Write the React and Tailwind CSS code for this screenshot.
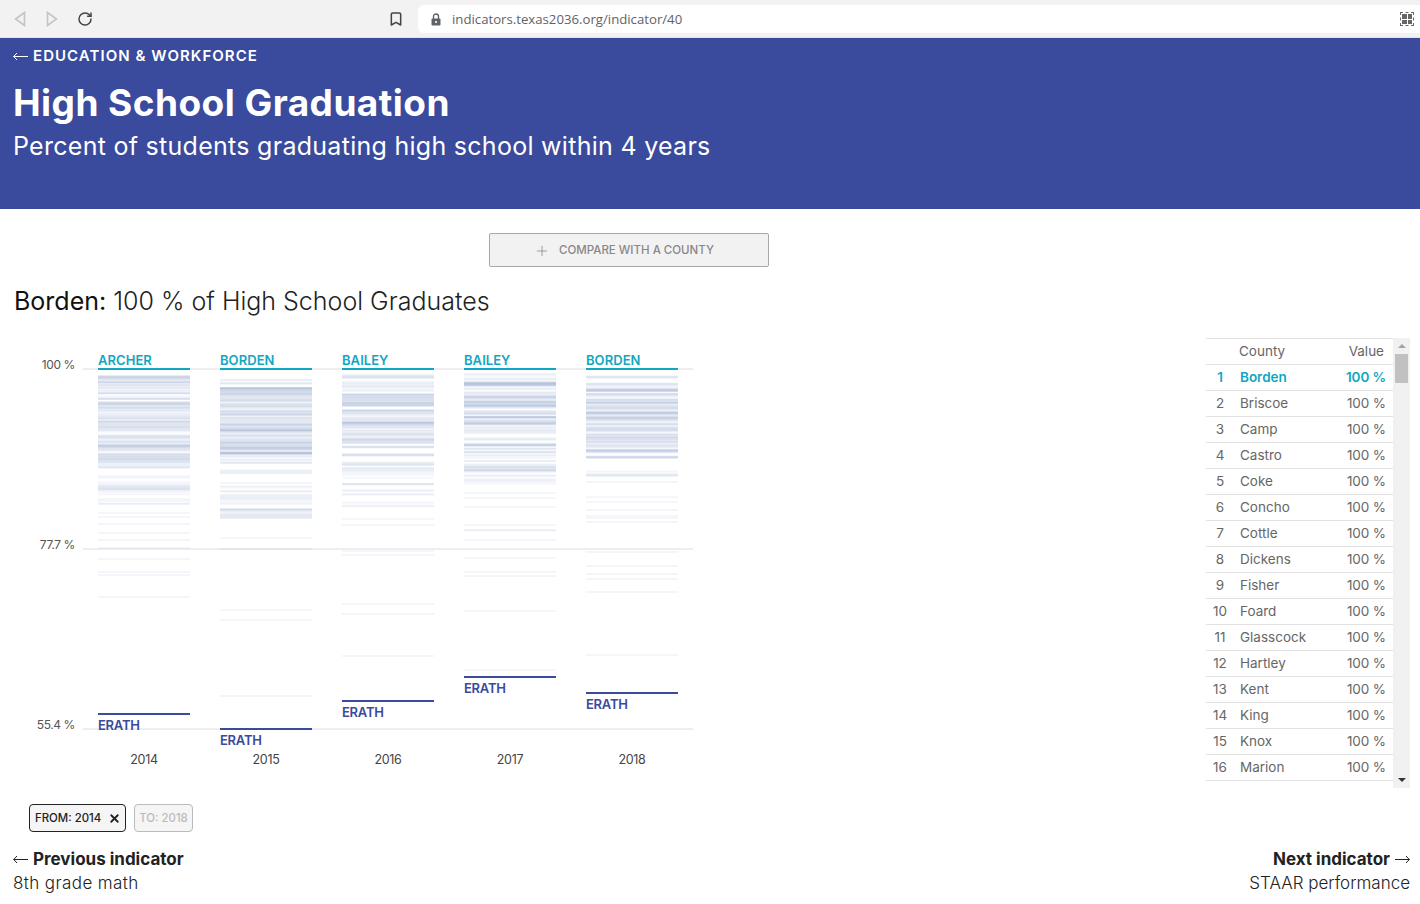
import { Bookmark, RotateCw, Plus, X } from "lucide-react";

const FONT = { fontFamily: '"Inter", "Open Sans", sans-serif' };

const ROWS = ["Borden", "Briscoe", "Camp", "Castro", "Coke", "Concho", "Cottle", "Dickens", "Fisher", "Foard", "Glasscock", "Hartley", "Kent", "King", "Knox", "Marion"];

// segs: [from y, to y, how many bands], lines: single faint bands lower down
const COLS = [
  { x: 98, year: 2014, top: "ARCHER", low: 714, seed: 3, segs: [[375, 467, 130], [473, 503, 18]], lines: [512, 516, 523, 532, 539, 547, 558, 571, 574, 596] },
  { x: 220, year: 2015, top: "BORDEN", low: 729, seed: 11, segs: [[377, 383, 5], [387, 463, 135], [468, 517, 30]], lines: [537, 548, 609, 619, 695] },
  { x: 342, year: 2016, top: "BAILEY", low: 701, seed: 23, segs: [[373, 390, 15], [393, 447, 85], [452, 457, 5], [461, 477, 13], [481, 484, 3], [489, 496, 4], [501, 507, 3]], lines: [518, 524, 550, 554, 603, 613, 655] },
  { x: 464, year: 2017, top: "BAILEY", low: 677, seed: 37, segs: [[373, 377, 3], [378, 413, 60], [415, 433, 28], [435, 440, 3], [442, 448, 11], [450, 483, 28]], lines: [492, 497, 506, 524, 529, 529.5, 539, 557, 571, 575, 610, 669] },
  { x: 586, year: 2018, top: "BORDEN", low: 693, seed: 51, segs: [[375, 380, 4], [382, 457, 120], [470, 477, 5]], lines: [481, 496, 501, 509, 515, 517, 521, 551, 565, 573, 578, 591, 654] },
];

// small seeded generator so the bands stay the same between renders
const rng = (seed) => {
  let s = seed;
  return () => {
    s = (s * 16807) % 2147483647;
    return (s % 10000) / 10000;
  };
};

const bands = (col) => {
  const r = rng(col.seed * 7919 + 1);
  const out = [];
  col.segs.forEach(([a, b, n]) => {
    for (let i = 0; i < n; i++) out.push(a + r() * (b - a));
  });
  return [...out, ...col.lines];
};

const Arrow = ({ flip }) => (
  <svg width="15" height="9" viewBox="0 0 15 9" className={`inline-block ${flip ? "rotate-180" : ""}`} fill="none" stroke="currentColor" strokeWidth="1">
    <path d="M0.5 4.5H15M4 1L0.7 4.5L4 8" />
  </svg>
);

const Tri = ({ flip }) => (
  <svg width="12" height="16" viewBox="0 0 12 16" className={flip ? "rotate-180" : ""} fill="none" stroke="#c4c4c4" strokeWidth="1.6">
    <path d="M10.5 1.5V14.5L1.5 8Z" />
  </svg>
);

const Chart = () => (
  <svg width="700" height="440" viewBox="0 340 700 440" className="block" style={FONT}>
    {[369, 549, 729].map((y) => (
      <rect key={y} x="83" y={y - 1} width="610" height="2" fill="#eeeef1" />
    ))}
    {[["100 %", 369], ["77.7 %", 549], ["55.4 %", 729]].map(([t, y]) => (
      <text key={t} x="75" y={y} textAnchor="end" fontSize="12" letterSpacing="-0.4" fill="#555">{t}</text>
    ))}
    {COLS.map((col) => (
      <g key={col.year}>
        {bands(col).map((y, i) => (
          <rect key={i} x={col.x} y={y} width="92" height="2" fill="#5a78b0" opacity="0.065" />
        ))}
        <rect x={col.x} y="368" width="92" height="2" fill="#12a6c2" />
        <text x={col.x} y="365" fontSize="13" fontWeight="600" letterSpacing="0.05" fill="#12a6c2">{col.top}</text>
        <rect x={col.x} y={col.low - 1} width="92" height="2" fill="#3a4a9c" />
        <text x={col.x} y={col.low + 16} fontSize="13" fontWeight="600" letterSpacing="-0.25" fill="#3a4a9c">ERATH</text>
        <text x={col.x + 46} y="764" textAnchor="middle" fontSize="12.5" letterSpacing="-0.3" fill="#444">{col.year}</text>
      </g>
    ))}
  </svg>
);

const CountyTable = () => (
  <div className="flex w-[204px] h-[450px]">
    <div className="w-[187px] text-[13.5px] text-[#666]">
      <div className="flex h-[27px] items-center border-y border-[#e2e2e2] pr-[9px]">
        <span className="ml-[33px]">County</span>
        <span className="ml-auto">Value</span>
      </div>
      {ROWS.map((name, i) => (
        <div key={name} className={`flex h-[26px] items-center border-b border-[#e2e2e2] pr-[7px] ${i === 0 ? "text-[#12a6c2] font-semibold" : ""}`}>
          <span className="w-[28px] text-center">{i + 1}</span>
          <span className="ml-[6px]">{name}</span>
          <span className="ml-auto tracking-[-0.1px]">100 %</span>
        </div>
      ))}
    </div>
    <div className="w-[17px] bg-[#f1f1f1] flex flex-col items-center">
      <div className="h-[16px] flex items-center justify-center">
        <div className="w-0 h-0 border-x-[4px] border-x-transparent border-b-[4px] border-b-[#a3a3a3]" />
      </div>
      <div className="w-[13px] h-[29px] bg-[#c1c1c1]" />
      <div className="mt-auto h-[16px] flex items-center justify-center">
        <div className="w-0 h-0 border-x-[4px] border-x-transparent border-t-[4px] border-t-[#333]" />
      </div>
    </div>
  </div>
);

export default function App() {
  return (
    <div className="w-[1420px] h-[904px] overflow-hidden bg-white text-[#222]" style={FONT}>
      <div className="h-[38px] bg-[#f2f2f2] flex items-center border-b border-[#e4e4e4]">
        <div className="ml-[14px]"><Tri /></div>
        <div className="ml-[20px]"><Tri flip /></div>
        <RotateCw size={16} strokeWidth={2.2} className="ml-[19px] text-[#444]" />
        <Bookmark size={16} strokeWidth={2.3} className="ml-[295px] text-[#444]" />
        <div className="ml-[14px] mt-[1px] flex-1 h-[28px] bg-white rounded-l-md flex items-center pl-[13px] text-[13.2px] text-[#5f6368]">
          <svg width="10" height="13" viewBox="0 0 10 13">
            <path d="M2.5 6V3.5a2.5 2.5 0 0 1 5 0V6" fill="none" stroke="#5f6368" strokeWidth="1.4" />
            <rect x="0.5" y="5.5" width="9" height="7" rx="1" fill="#5f6368" />
            <circle cx="5" cy="9" r="1.1" fill="#fff" />
          </svg>
          <span className="ml-[11px] pt-[1px]" style={{ fontFamily: '"Open Sans", sans-serif' }}>indicators.texas2036.org/indicator/40</span>
          <div className="ml-auto mr-[6px] w-[14px] h-[14px] border border-dashed border-[#666] grid grid-cols-2 gap-[1px] p-[1px]">
            <span className="bg-[#666]" /><span className="bg-[#666]" /><span className="bg-[#666]" /><span className="bg-[#666]" />
          </div>
        </div>
      </div>

      <header className="h-[171px] bg-[#3a4a9c] text-white pl-[13px] pt-[9px]">
        <div className="text-[15px] font-semibold leading-[18px] tracking-[1.05px] flex items-center gap-[5px]"><Arrow /> EDUCATION &amp; WORKFORCE</div>
        <h1 className="mt-[16px] text-[37px] font-bold leading-[44px] tracking-[0.45px]">High School Graduation</h1>
        <p className="mt-[5px] text-[25px] leading-[32px] tracking-[0.28px]">Percent of students graduating high school within 4 years</p>
      </header>

      <div className="pl-[489px] pt-[24px]">
        <button className="w-[280px] h-[34px] pr-[10px] pt-[1px] bg-[#f2f2f2] border border-[#a8a8a8] rounded-[2px] flex items-center justify-center gap-[9px] text-[11.5px] font-medium text-[#888]">
          <Plus size={16} strokeWidth={1.2} />
          COMPARE WITH A COUNTY
        </button>
      </div>

      <h2 className="pl-[14px] mt-[17px] text-[25px] leading-[34px] font-light">
        <span className="font-normal text-[#111]">Borden:</span> 100 % of High School Graduates
      </h2>

      <div className="flex justify-between pr-[10px] mt-[22px]">
        <Chart />
        <div className="mt-[-2px]">
          <CountyTable />
        </div>
      </div>

      <div className="pl-[29px] mt-[16px] flex gap-[8px] text-[11.4px] font-medium">
        <div className="h-[28px] w-[97px] pt-[1px] border border-[#222] rounded-[4px] bg-[#f5f5f5] flex items-center pl-[5px]">
          FROM: 2014
          <X size={13} strokeWidth={3.4} className="ml-auto mr-[4px]" />
        </div>
        <div className="h-[28px] w-[59px] pt-[1px] border border-[#bbb] rounded-[4px] bg-[#f5f5f5] text-[#bbb] flex items-center justify-center">TO: 2018</div>
      </div>

      <div className="flex justify-between pl-[13px] pr-[10px] mt-[15px] text-[17px] leading-[24px]">
        <div>
          <div className="font-bold flex items-center gap-[5px]"><Arrow /> Previous indicator</div>
          <div className="font-light tracking-[0.4px]">8th grade math</div>
        </div>
        <div className="text-right">
          <div className="font-bold flex items-center justify-end gap-[5px]">Next indicator <Arrow flip /></div>
          <div className="font-light">STAAR performance</div>
        </div>
      </div>
    </div>
  );
}
